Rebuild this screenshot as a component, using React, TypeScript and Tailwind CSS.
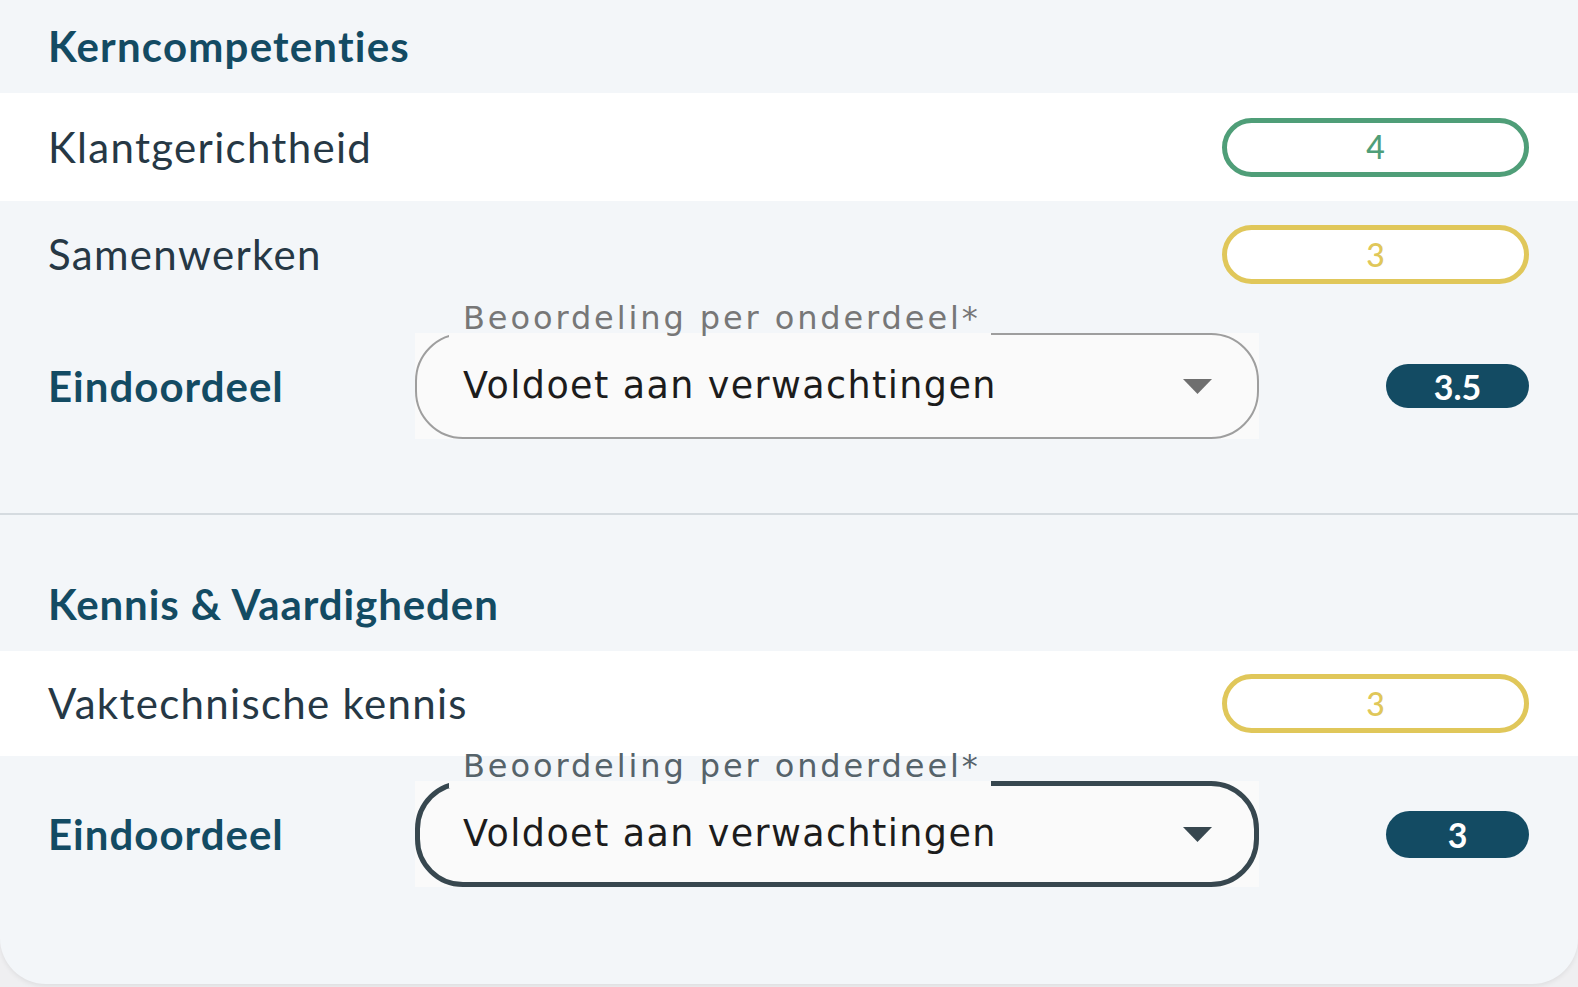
import React from "react";

type Tone = "green" | "yellow";

function ScoreBadge({ value, tone }: { value: string; tone: Tone }) {
    const cls =
        tone === "green"
            ? "border-[#4f9e78] text-[#4f9e78]"
            : "border-[#e0c75a] text-[#e0c75a]";
    return (
        <div
            className={`w-[307px] h-[59px] rounded-full border-[5px] bg-white flex items-center justify-center text-[32px] font-medium ${cls}`}
        >
            {value}
        </div>
    );
}

function Row({ label, value, tone, white, height }: { label: string; value: string; tone: Tone; white?: boolean; height: string }) {
    return (
        <div className={`flex items-center justify-between pl-12 pr-[49px] ${height} ${white ? "bg-white" : ""}`}>
            <span className="text-[42px] tracking-[1.3px] text-[#263845]">{label}</span>
            <ScoreBadge value={value} tone={tone} />
        </div>
    );
}

function Final({ value, focused, badgeHeight }: { value: string; focused?: boolean; badgeHeight: string }) {
    return (
        <div className="flex items-center pl-12 pr-[49px]">
            <span className="w-[367px] text-[42px] tracking-[1px] font-bold text-[#134b63]">Eindoordeel</span>
            <div className="relative w-[844px] h-[106px] bg-[#fafafa] flex items-center justify-between pl-[48px] pr-[47px] font-['DejaVu_Sans',sans-serif]">
                <div
                    className={`absolute inset-0 rounded-[48px] ${focused ? "border-[5px] border-[#37474f]" : "border-2 border-[#9e9e9e]"}`}
                />
                <span
                    className={`absolute left-[34px] top-[-34px] pl-[14px] pr-[10px] h-[41px] leading-[38px] text-[32px] tracking-[2.9px] whitespace-nowrap bg-[linear-gradient(to_bottom,transparent_34px,#fafafa_34px)] ${focused ? "text-[#56636a]" : "text-[#777777]"}`}
                >
                    Beoordeling per onderdeel*
                </span>
                <span className="relative text-[36.5px] tracking-[1.4px] text-[#1c1c1c] whitespace-nowrap">Voldoet aan verwachtingen</span>
                <svg width="29" height="15" viewBox="0 0 29 15" className="relative">
                    <polygon points="0,0 29,0 14.5,15" fill={focused ? "#37474f" : "#6f6f6f"} />
                </svg>
            </div>
            <div className="flex-1 flex justify-end">
                <div className={`w-[143px] ${badgeHeight} rounded-full bg-[#134b63] text-white text-[34px] font-bold flex items-center justify-center`}>
                    {value}
                </div>
            </div>
        </div>
    );
}

export default function App() {
    return (
        <div className="min-h-screen bg-[#efeff1] font-['Lato',sans-serif]">
            <div className="bg-[#f3f6f9] rounded-b-[46px] shadow-[0_2px_5px_rgba(0,0,0,0.07)] pb-[97px]">
                <section>
                    <h2 className="h-[93px] flex items-center px-12 text-[42px] tracking-[1.2px] font-bold text-[#134b63]">Kerncompetenties</h2>
                    <Row label="Klantgerichtheid" value="4" tone="green" white height="h-[108px]" />
                    <Row label="Samenwerken" value="3" tone="yellow" height="h-[107px]" />
                    <div className="mt-[25px]">
                        <Final value="3.5" badgeHeight="h-[44px]" />
                    </div>
                    <div className="h-[74px]" />
                </section>
                <div className="h-[2px] bg-[#d5dbe0]" />
                <section className="pt-[43px]">
                    <h2 className="h-[93px] flex items-center px-12 text-[42px] tracking-[0.9px] font-bold text-[#134b63]">Kennis &amp; Vaardigheden</h2>
                    <Row label="Vaktechnische kennis" value="3" tone="yellow" white height="h-[105px]" />
                    <div className="mt-[25px]">
                        <Final value="3" focused badgeHeight="h-[47px]" />
                    </div>
                </section>
            </div>
        </div>
    );
}
